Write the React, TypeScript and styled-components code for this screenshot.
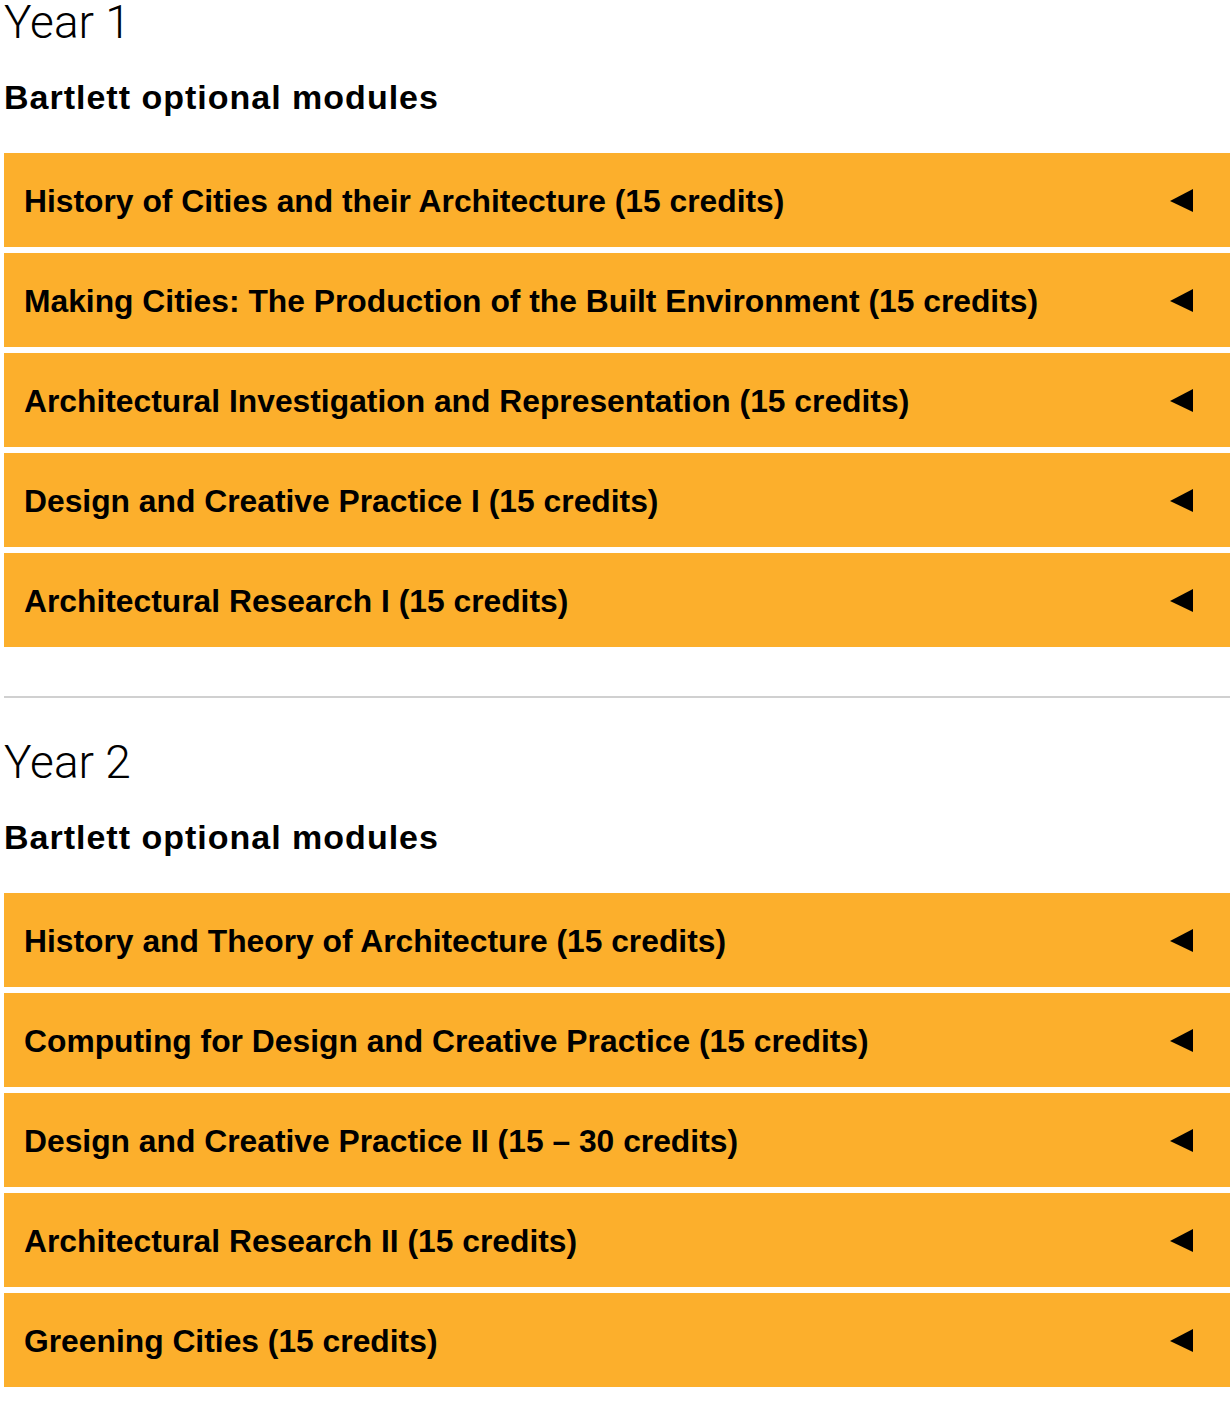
import React from 'react';
import styled, { createGlobalStyle } from 'styled-components';

const GlobalStyle = createGlobalStyle`
  html, body {
    margin: 0;
    padding: 0;
    background: #fff;
  }
  body {
    font-family: 'Liberation Sans', Arial, Helvetica, sans-serif;
    color: #000;
  }
`;

const Page = styled.main`
  padding: 0 0 0 4px;
`;

const YearSection = styled.section`
  display: flex;
  flex-direction: column;
`;

const YearTitle = styled.h2`
  margin: 0;
  font-family: Roboto, 'Liberation Sans', sans-serif;
  font-size: 46px;
  font-weight: 300;
  line-height: 44px;
  letter-spacing: 0;
`;

const GroupTitle = styled.h3`
  margin: 33px 0 0;
  font-size: 34px;
  font-weight: 700;
  line-height: 40px;
  letter-spacing: 1px;
`;

const ModuleList = styled.ul`
  list-style: none;
  margin: 36px 0 0;
  padding: 0;
  display: flex;
  flex-direction: column;
  gap: 6px;
`;

const ModuleItem = styled.li`
  height: 94px;
  background: #fcaf2c;
  display: flex;
  align-items: center;
  justify-content: space-between;
  padding: 2px 36px 0 20px;
  box-sizing: border-box;
  cursor: pointer;
`;

const ModuleName = styled.span`
  font-size: 31.8px;
  font-weight: 700;
  line-height: 36px;
`;

const Arrow = styled.svg`
  width: 24px;
  height: 24px;
  flex: none;
`;

const Divider = styled.hr`
  border: 0;
  border-top: 2px solid #d0d0d0;
  margin: 49px 0 42px;
`;

const years = [
  {
    title: 'Year 1',
    modules: [
      'History of Cities and their Architecture (15 credits)',
      'Making Cities: The Production of the Built Environment (15 credits)',
      'Architectural Investigation and Representation (15 credits)',
      'Design and Creative Practice I (15 credits)',
      'Architectural Research I (15 credits)',
    ],
  },
  {
    title: 'Year 2',
    modules: [
      'History and Theory of Architecture (15 credits)',
      'Computing for Design and Creative Practice (15 credits)',
      'Design and Creative Practice II (15 – 30 credits)',
      'Architectural Research II (15 credits)',
      'Greening Cities (15 credits)',
    ],
  },
];

const App = () => {
  return (
    <>
      <GlobalStyle />
      <Page>
        {years.map((year, i) => (
          <React.Fragment key={year.title}>
            {i > 0 && <Divider />}
            <YearSection>
              <YearTitle>{year.title}</YearTitle>
              <GroupTitle>Bartlett optional modules</GroupTitle>
              <ModuleList>
                {year.modules.map((m) => (
                  <ModuleItem key={m}>
                    <ModuleName>{m}</ModuleName>
                    <Arrow viewBox="0 0 24 24">
                      <polygon points="0,12 23,0 23,23" fill="#000" />
                    </Arrow>
                  </ModuleItem>
                ))}
              </ModuleList>
            </YearSection>
          </React.Fragment>
        ))}
      </Page>
    </>
  );
};

export default App;
